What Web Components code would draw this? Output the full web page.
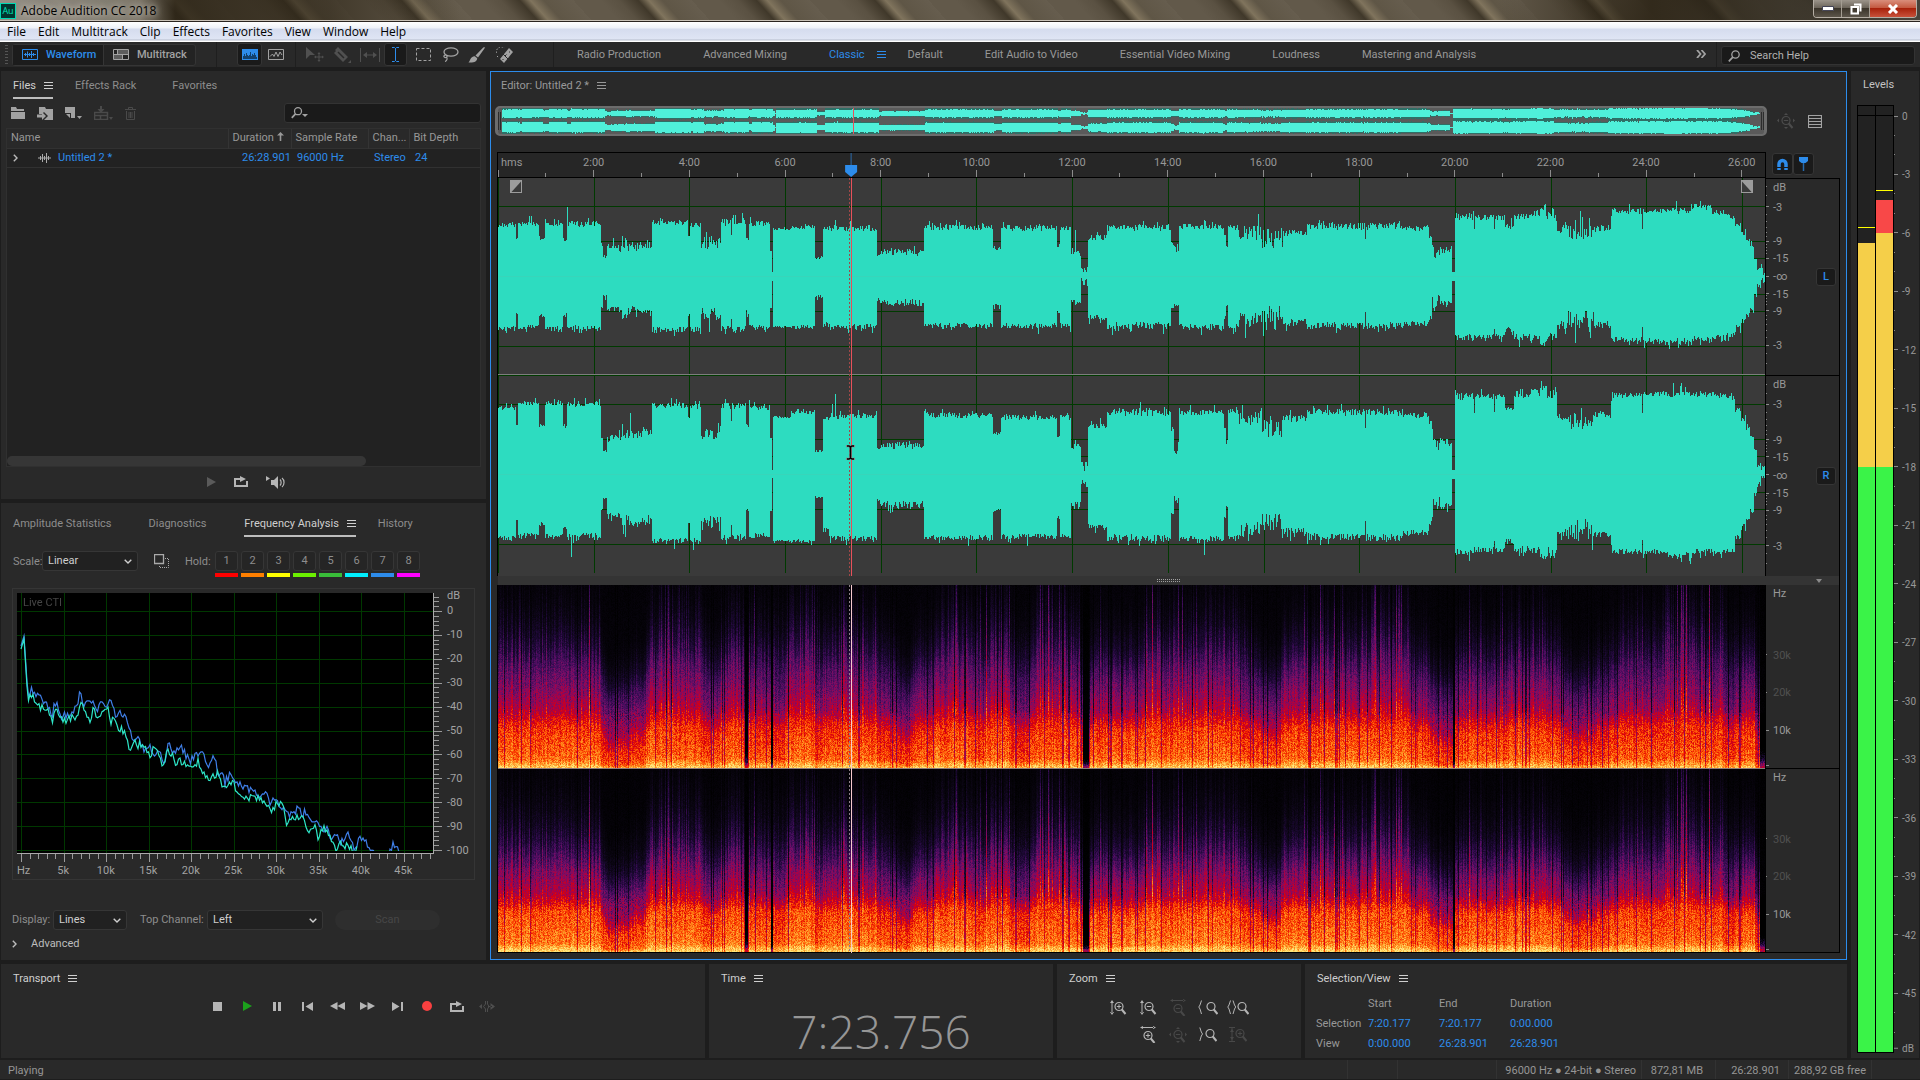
<!DOCTYPE html>
<html lang="en">
<head>
<meta charset="utf-8">
<title>Adobe Audition CC 2018</title>
<style>
  html, body { margin: 0; height: 100%; background: #1d1d1d; }
  body {
    --bg: #1d1d1d; --panel: #292929; --well: #222; --line: #353535;
    --dim: #8d8d8d; --text: #a2a2a2; --bright: #cfcfcf; --blue: #2d8ceb; --off: #484848;
    font: 11px/16px Roboto, "Open Sans", sans-serif; color: var(--text);
  }
</style>
</head>
<body>
<audition-app></audition-app>

<script>
const BASE = `
  * { box-sizing: border-box; }
  button, input, select { font: inherit; color: inherit; background: none; border: 0; margin: 0; padding: 0; outline: 0; appearance: none; text-align: left; white-space: nowrap; }
  svg { display: block; flex: none; }
`;
function define(name, css, html, extra = {}) {
  customElements.define(name, class extends HTMLElement {
    constructor() {
      super();
      const root = this.attachShadow({ mode: 'open' });
      const t = document.createElement('template');
      t.innerHTML = `<style>:host{display:block;min-width:0;min-height:0}${BASE}${css}</style>` + (typeof html === 'function' ? html(this) : html);
      root.append(t.content.cloneNode(true));
    }
    connectedCallback() { extra.ready && extra.ready.call(this, this.shadowRoot); }
  });
}

/* ---------- icons ---------- */
const zoomBody = sign => `<circle cx="9" cy="6.5" r="4" fill="none" stroke="currentColor" stroke-width="1.2"/><path d="M11.8 9.5 15.5 14" stroke="currentColor" stroke-width="2" fill="none"/>${sign}`;
const plus = '<path d="M6.8 6.5h4.4M9 4.3v4.4" stroke="currentColor"/>', minus = '<path d="M6.8 6.5h4.4" stroke="currentColor"/>';
const vArrow = '<path d="M2 0 4 3H0ZM2 15 4 12H0ZM1.5 2h1v11h-1z" fill="currentColor"/>';
const hArrow = '<path d="M1 1.5 4 0v3ZM17 1.5 14 0v3ZM3 1h12v1H3z" fill="currentColor"/>';
const ICONS = {
  menu: [9, 8, '<path d="M0 0h9v1H0zM0 3h9v1H0zM0 6h9v1H0z" fill="currentColor"/>'],
  wave: [16, 11, '<path d="M.5.5h15v10H.5z" fill="none" stroke="currentColor"/><path d="M2 5.5h12M3.5 4v3M5.500 2.500v6M7.500 4v3M9.500 2v7M11.500 4v3" stroke="currentColor" fill="none"/>'],
  multi: [16, 11, '<path d="M.5.5h15v10H.5zM0 5.500h16M4.500 0v5.500M9.500 5.500v5" fill="none" stroke="currentColor"/><path d="M5 1h10v4H5zM1 6h8v4H1z" fill="currentColor" opacity=".45"/>'],
  waveview: [16, 11, '<path d="M0 0h16v11H0z" fill="currentColor"/><path d="M1 10V7h1V5h1v2h1V4h1v2h1v1h1V6h1V3h1v4h1V5h1v1h1V4h1v2h1v2h1v2z" fill="#12426f"/>'],
  specview: [16, 11, '<path d="M.5.500h15v10H.5z" fill="none" stroke="currentColor"/><path d="M2 7.500 4.500 5 6 7.500 8 3l2 4.500L12 3l2 3" fill="none" stroke="currentColor"/>'],
  move: [18, 15, '<path d="M0 0 9 8H4L0 12ZM12.500 7h1v6h-1zM10 9.500h6v1h-6z" fill="currentColor"/><path d="m13 5 1.500 2h-3zM13 15l1.500-2h-3zM8 10l2-1.500v3zM18 10l-2-1.500v3z" fill="currentColor"/>'],
  razor: [18, 16, '<path d="M5 0 15 10l-5 5L1 6l2-2-1-1Z" fill="currentColor"/><path d="m5 5 6 6" stroke="#292929" stroke-width="1.500"/><path d="M18 13v3h-3z" fill="currentColor"/>'],
  slip: [20, 14, '<path d="M.5 0v14M19.500 0v14M5 7h10" stroke="currentColor" fill="none"/><path d="m3 7 4-3v6zM17 7l-4-3v6z" fill="currentColor"/>'],
  ibeam: [9, 15, '<path d="M1 .5h2.500l1 1 1-1H8M1 14.500h2.500l1-1 1 1H8M4.500 1v13" fill="none" stroke="currentColor"/>'],
  marquee: [15, 13, '<path d="M.5.500h14v12H.5z" fill="none" stroke="currentColor" stroke-dasharray="3 2"/>'],
  lasso: [17, 15, '<ellipse cx="9" cy="5" rx="7" ry="4.200" fill="none" stroke="currentColor" stroke-width="1.300"/><path d="M3 8c-2 1-1 3 1 2.500S5 8 3.500 8.500M4 10c2 1 1 4-1 4.500" fill="none" stroke="currentColor" stroke-width="1.200"/>'],
  brush: [17, 16, '<path d="M16.500 0c.5.500.3 1-.2 1.700L10 10.500 7.500 8.500 15 .8c.5-.5 1-.8 1.500-.8ZM6.800 9.300 9.200 11.300c0 3-3 4.700-8.700 4.200 2-1.500 1.300-5.700 6.300-6.200Z" fill="currentColor"/>'],
  heal: [17, 16, '<path d="m13 1 4 4L8 16l-4-4Z" fill="currentColor"/><path d="m7 7 5 5M9 9l1.500-1.500M13.500 4.500v1M7 12v1" stroke="#292929" fill="none"/><path d="M.5 6a5 5 0 0 1 8-5M1 9l2 2" fill="none" stroke="currentColor" stroke-dasharray="1.500 1.500"/>'],
  more: [10, 8, '<path d="m1 0 3.500 4L1 8M5.500 0 9 4 5.500 8" fill="none" stroke="currentColor" stroke-width="1.800"/>'],
  search: [12, 12, '<circle cx="7.500" cy="4.500" r="3.700" fill="none" stroke="currentColor" stroke-width="1.300"/><path d="M4.800 7.200.8 11.300" stroke="currentColor" stroke-width="1.700"/>'],
  searchd: [17, 12, '<circle cx="7" cy="4.200" r="3.500" fill="none" stroke="currentColor" stroke-width="1.300"/><path d="M4.500 6.800.8 10.800" stroke="currentColor" stroke-width="1.700"/><path d="M11 7h6l-3 3z" fill="currentColor"/>'],
  folder: [14, 12, '<path d="M0 0h5l1 2h7v2H0ZM0 5h14v7H0z" fill="currentColor"/>'],
  import: [16, 14, '<path d="M2 1h6l1 2h7v11H7l4-4-4-4-2 2H2Z" fill="currentColor"/><path d="M0 8.500h5V6l4 4-4 4v-2.500H0z" fill="currentColor"/>'],
  newfile: [17, 13, '<path d="M0 0h10v11H6V6H0Z" fill="currentColor"/><path d="M1 7h4v4z" fill="currentColor"/><path d="M12 9h5l-2.500 3z" fill="currentColor"/>'],
  insert: [19, 14, '<path d="M.5 6.500h13v7H.5zM0 9.500h14M6.500 9v5" fill="none" stroke="currentColor" stroke-width="1.500"/><path d="M6 0h2v3h2.500L7 7 3.500 3H6ZM15 11h4l-2 3z" fill="currentColor"/>'],
  trash: [11, 13, '<path d="M0 2.500h11M3.500 2V.500h4V2M1.500 4v8.500h8V4M4 5v6M5.500 5v6M7 5v6" fill="none" stroke="currentColor"/>'],
  up: [7, 9, '<path d="M3.500 0 7 3.500H4.300V9H2.700V3.500H0Z" fill="currentColor"/>'],
  chevr: [5, 8, '<path d="m.8.800 3.200 3.200-3.200 3.200" fill="none" stroke="currentColor" stroke-width="1.400"/>'],
  chevd: [8, 5, '<path d="m.7.700 3.300 3.300L7.300.7" fill="none" stroke="currentColor" stroke-width="1.400"/>'],
  clip: [13, 10, '<path d="M0 5h13M2.500 3v4M4.500 1v8M6.500 3v4M8.500 0v10M10.500 3v4" fill="none" stroke="currentColor"/>'],
  play: [9, 10, '<path d="M0 0 9 5 0 10Z" fill="currentColor"/>'],
  stop: [9, 9, '<path d="M0 0h9v9H0z" fill="currentColor"/>'],
  pause: [8, 9, '<path d="M0 0h3v9H0zM5 0h3v9H5z" fill="currentColor"/>'],
  prev: [11, 9, '<path d="M0 0h2v9H0zM11 0v9L3.500 4.500Z" fill="currentColor"/>'],
  next: [11, 9, '<path d="M9 0h2v9H9zM0 0v9l7.500-4.500Z" fill="currentColor"/>'],
  rew: [15, 8, '<path d="M7.500 0v8L0 4ZM15 0v8L7.500 4Z" fill="currentColor"/>'],
  ff: [15, 8, '<path d="M0 0v8l7.500-4ZM7.500 0v8L15 4Z" fill="currentColor"/>'],
  rec: [10, 10, '<circle cx="5" cy="5" r="5" fill="currentColor"/>'],
  loop: [14, 11, '<path d="M4 3H1v7h12V5" fill="none" stroke="currentColor" stroke-width="2"/><path d="M3 2h3V0l6 3-6 3V4H3z" fill="currentColor"/>'],
  skip: [16, 11, '<path d="M0 5.500 3 3v5zM16 5.500 11.500 2v7zM9 5h4v1H9z" fill="currentColor"/><path d="M6.500 0v3l-2 2.500 2 2.500v3M8.500 0v3l1.500 2.500L8.500 8v3" fill="none" stroke="currentColor"/>'],
  speaker: [20, 14, '<path d="M0 1v5l4-2.500ZM5 5h3l4-4v13l-4-4H5Z" fill="currentColor"/><path d="M14 4.500c1.500 1.500 1.500 4.500 0 6M16 3c2.700 2 2.700 7 0 9" fill="none" stroke="currentColor" stroke-width="1.200"/>'],
  copy: [15, 14, '<path d="M.5.500h9v9H.5z" fill="none" stroke="currentColor" stroke-width="1.300"/><path d="M11 4.500h3.500v9h-9V11" fill="none" stroke="currentColor" stroke-dasharray="1 1"/>'],
  list: [14, 13, '<path d="M.5.500h13v12H.5zM0 3.500h14M0 6.500h14M0 9.500h14" fill="none" stroke="currentColor" stroke-width="1.200"/>'],
  magnet: [13, 13, '<path d="M3 12V6a3.500 3.500 0 0 1 7 0v6" fill="none" stroke="currentColor" stroke-width="3.500"/><path d="M1 9.500h4M8 9.500h4" stroke="#1a1a1a"/>'],
  pin: [9, 14, '<path d="M0 0h9v4L6.500 6h-4L0 4Z" fill="currentColor"/><path d="M4.500 5v9" stroke="currentColor" stroke-width="1.500" opacity=".7"/>'],
  cross: [18, 16, '<g transform="translate(0 1)">' + zoomBody(minus) + '</g><path d="M9 0l2 2H7zM9 16l2-2H7zM0 7.500l2-2v4zM18 7.500l-2-2v4z" fill="currentColor"/>'],
  vin: [17, 15, vArrow + zoomBody(plus)], vout: [17, 15, vArrow + zoomBody(minus)],
  hout: [18, 17, hArrow + `<g transform="translate(0 3)">${zoomBody(minus)}</g>`],
  hin: [18, 17, hArrow + `<g transform="translate(0 3)">${zoomBody(plus)}</g>`],
  zl: [20, 15, '<path d="M3.500 0.500 2 5 .8 7 2 9l1.500 5" fill="none" stroke="currentColor"/><g transform="translate(4 0)">' + zoomBody('') + '</g>'],
  zsel: [22, 15, '<path d="M3.500 0.500 2 5 .8 7 2 9l1.500 5M6 0.500l1.500 4.500 1.200 2-1.200 2L6 14" fill="none" stroke="currentColor"/><g transform="translate(6 0)">' + zoomBody('') + '</g>'],
  zr: [18, 15, '<path d="m.8 0.500 1.500 4.500 1.200 2-1.200 2L.8 14" fill="none" stroke="currentColor"/><g transform="translate(2 0)">' + zoomBody('') + '</g>'],
  vfull: [18, 15, '<path d="M0 .5h6M0 14.500h6M3 1v13" stroke="currentColor" fill="none"/><path d="m3 2 2 3H1zM3 13l2-3H1z" fill="currentColor"/><g transform="translate(2 0)">' + zoomBody(plus) + '</g>'],
  fadein: [12, 13, '<path d="M0 0h12v13H0z" fill="#9c9c9c"/><path d="M11 1.500V12H1.500Z" fill="#3a3a3a"/>'],
  fadeout: [12, 13, '<path d="M0 0h12v13H0z" fill="#9c9c9c"/><path d="M1 1.500V12h9.500Z" fill="#3a3a3a"/>'],
  cursor: [9, 15, '<path d="M0 1h3l1.500 1L6 1h3M0 14h3l1.500-1L6 14h3M4.500 2v11" fill="none" stroke="#888" stroke-width="2.500"/><path d="M1 1h2l1.500 1L6 1h2M1 14h2l1.500-1L6 14h2M4.500 2v11" fill="none" stroke="#000" stroke-width="1.500"/>'],
  grip: [23, 4, '<path d="M0 .5h23M0 2.500h23" stroke="#a0a0a0" stroke-dasharray="1 1" fill="none"/>'],
  tri: [6, 4, '<path d="M0 0h6L3 4z" fill="#8a8a8a"/>']
};
customElements.define('ui-icon', class extends HTMLElement {
  constructor() {
    super();
    const [w, h, body] = ICONS[this.getAttribute('name')];
    this.attachShadow({ mode: 'open' }).innerHTML =
      `<style>:host{display:inline-flex;flex:none}svg{display:block}</style><svg width="${w}" height="${h}" viewBox="0 0 ${w} ${h}" aria-hidden="true">${body}</svg>`;
  }
});
const icon = n => `<ui-icon name="${n}"></ui-icon>`;

/* ---------- audio picture data ---------- */
const MINUTES = 26.4817, SPAN = 1267;
function rng(seed) { return () => { seed |= 0; seed = seed + 0x6D2B79F5 | 0; let t = Math.imul(seed ^ seed >>> 15, 1 | seed); t = t + Math.imul(t ^ t >>> 7, 61 | t) ^ t; return ((t ^ t >>> 14) >>> 0) / 4294967296; }; }
/* end, left top, left bottom, right top, right bottom, roughness */
const SEGMENTS = [
  [18,51,51,66,63,2],[20,37,37,48,46,1],[41,52,50,71,60,2],[47,37,39,48,49,2],[65,52,51,71,61,2],[69,37,38,48,52,2],
  [103,52,51,70,61,3],[105,31,31,36,35,1],[109,19,19,23,23,1],[124,28,33,36,41,4],[141,33,37,42,46,9],[154,32,37,41,44,5],
  [190,54,53,69,66,3],[192,40,37,57,49,1],[203,52,53,68,66,3],[223,34,38,41,47,8],[233,54,52,69,63,4],[234,41,41,52,50,1],
  [248,55,53,69,62,4],[251,36,35,48,36,2],[272,53,51,67,61,3],[274,26,30,36,36,1],[275,4,4,4,3,0],[293,47,50,57,66,1],
  [317,49,50,62,66,2],[325,19,19,23,22,2],[331,48,47,56,54,2],[379,48,50,58,64,3],[382,21,22,27,25,2],[426,24,26,29,30,4],
  [495,49,49,59,63,3],[503,28,28,40,36,2],[559,48,49,57,62,3],[562,31,36,38,42,2],[573,48,49,57,62,3],[583,23,26,28,30,3],
  [590,7,6,8,8,6],[609,39,41,48,52,3],[673,49,49,62,63,4],[676,33,31,45,40,2],[681,28,29,24,25,4],[726,50,50,62,64,3],
  [728,40,38,45,44,2],[730,29,28,32,33,2],[741,49,50,63,62,3],[764,44,44,57,55,9],[785,38,37,46,48,12],[809,43,46,56,56,4],
  [867,50,49,62,62,4],[868,37,35,46,46,0],[905,50,49,62,63,4],[931,48,47,59,58,3],[934,39,42,51,49,3],[942,25,25,31,29,8],
  [954,27,27,32,32,4],[957,4,4,4,4,0],[976,60,61,78,78,4],[977,47,58,61,72,0],[996,59,60,78,75,3],[997,47,52,62,66,0],
  [1007,59,60,78,75,3],[1016,50,53,66,67,4],[1032,60,60,80,75,4],[1042,64,61,82,76,4],[1048,69,66,86,81,3],[1059,60,60,80,77,5],
  [1070,47,48,58,59,5],[1096,43,43,54,54,11],[1113,48,48,60,60,4],[1114,60,60,74,72,2],[1144,65,63,79,77,3],[1145,47,50,61,65,0],
  [1170,65,64,80,77,3],[1194,66,65,80,81,4],[1214,69,62,80,77,3],[1228,64,62,79,77,4],[1237,60,59,77,75,3],[1243,51,51,65,63,3],
  [1248,43,44,55,52,3],[1252,36,37,46,44,2],[1256,31,32,38,36,2],[1259,16,18,24,20,2],[1263,9,10,9,9,4],[1267,4,3,5,3,3]
];
const SPIKES = { 33: [60,0,70,0], 69: [69,0,70,0], 73: [0,0,0,82], 124: [40,40,50,50], 337: [56,0,80,0], 334: [0,0,70,0], 577: [46,0,0,0], 505: [54,0,0,0], 706: [0,0,0,80], 642: [0,0,72,0], 1175: [0,0,91,0], 1183: [0,0,91,0], 31: [60,0,0,0], 211: [0,55,0,0], 176: [0,59,0,74], 529: [0,0,0,71], 614: [0,58,0,0] };
const ENVELOPE = (() => {
  const r = rng(7), out = []; let s = 0;
  for (let x = 0; x < SPAN; x++) {
    while (s < SEGMENTS.length - 1 && x >= SEGMENTS[s][0]) s++;
    const g = SEGMENTS[s], j = g[5] && g[5] + .8;
    out.push([1, 2, 3, 4].map((k, i) => {
      let v = g[k] + (r() - .55) * j * 1.5 + (r() > .86 ? r() * j * 1.6 : 0);
      const sp = SPIKES[x]; if (sp && sp[i]) v = Math.max(v, sp[i]);
      return Math.max(1, v);
    }));
  }
  return out;
})();
function fitCanvas(root, draw) {
  const c = root.querySelector('canvas');
  new ResizeObserver(() => {
    const w = c.clientWidth, h = c.clientHeight;
    if (!w || !h) return;
    c.width = w; c.height = h; draw(c.getContext('2d'), w, h);
  }).observe(c);
}
function drawEnvelope(g, w, cy, ch, k) {
  for (let x = 0; x < w; x++) {
    const e = ENVELOPE[Math.min(SPAN - 1, Math.floor(x * SPAN / w))];
    const a = Math.round(e[ch * 2] * k), b = Math.round(e[ch * 2 + 1] * k);
    g.fillRect(x, Math.round(cy) - a, 1, a + b + 1);
  }
}
const CANVAS = ':host{contain:size;position:relative;overflow:hidden}canvas{display:block;width:100%;height:100%}';
const HEAD = .2787;

define('wave-display', CANVAS + `
  button{position:absolute;top:2px} .in{left:12px} .out{right:12px} .cur{position:absolute;left:27.45%;top:267px;pointer-events:none}`,
  `<canvas></canvas><button class="in" aria-label="Fade in">${icon('fadein')}</button><button class="out" aria-label="Fade out">${icon('fadeout')}</button><span class="cur">${icon('cursor')}</span>`,
  { ready(root) { fitCanvas(root, (g, w, h) => {
    g.fillStyle = '#3a3a3a'; g.fillRect(0, 0, w, h);
    const k = h / 398, green = '#003a00';
    g.fillStyle = green;
    for (let m = 0; m < MINUTES; m += 2) g.fillRect(Math.round(m / MINUTES * w), 0, 1, 395 * k);
    for (const c of [98, 296]) for (const d of [-70, -35, -18, 18, 35, 70]) g.fillRect(0, Math.round((c + d) * k), w, 1);
    g.fillStyle = '#2ddcc0';
    drawEnvelope(g, w, 98 * k, 0, k); drawEnvelope(g, w, 296 * k, 1, k);
    g.fillStyle = 'rgba(70,205,180,.45)';
    for (const c of [98, 296]) g.fillRect(0, Math.round(c * k), w, 1);
    g.fillStyle = '#7d7d7d'; g.fillRect(0, Math.round(196 * k), w, 1);
    g.fillStyle = green; g.fillRect(0, Math.round(197 * k), w, 1);
    const p = Math.round(HEAD * w);
    g.fillStyle = '#a04848'; for (let y = 0; y < h; y += 4) g.fillRect(p - 2, y, 1, 2);
    g.fillStyle = '#e8505a'; g.fillRect(p, 0, 1, h);
  }); } });

define('wave-overview', CANVAS + `:host{border:2px solid #6c6c6c;border-radius:5px;background:#5a5a5a;padding:0 4px}
  :host{border-left-width:3px;border-right-width:3px} .h{position:absolute;top:4px;bottom:4px;width:3px;border:solid #2c2c2c;border-width:0 1px}`,
  `<canvas></canvas><span class="h" style="left:0"></span><span class="h" style="right:0"></span>`,
  { ready(root) { fitCanvas(root, (g, w) => {
    g.fillStyle = '#2f6f66'; drawEnvelope(g, w, 5, 0, .1); drawEnvelope(g, w, 19, 1, .09);
    g.fillStyle = '#4ff0da'; drawEnvelope(g, w, 5, 0, .07); drawEnvelope(g, w, 19, 1, .07);
    g.fillStyle = '#e8505a'; g.fillRect(Math.round(HEAD * w), 0, 1, 26);
  }); } });

/* spectrogram: [end, reach, brightness] */
const LOUD = [[103,1,0],[112,.22,-.04],[130,.34,-.05],[148,.5,-.05],[203,1.1,0],[212,.8,-.04],[223,.6,-.04],[247,1.05,0],[250,.08,-.25],[273,.95,-.03],
  [275,.06,-.35],[287,.95,-.09],[317,1.1,-.01],[323,.65,-.08],[379,1.02,-.01],[398,.85,-.08],[412,.42,-.07],[435,.8,-.03],[479,1.1,0],[488,.9,-.06],[511,1.1,0],
  [532,.85,-.08],[582,1.1,-.01],[585,.6,-.1],[591,.06,-.35],[640,.8,0],[745,1.02,0],[760,.75,-.05],[783,.48,-.03],[815,.95,0],[870,1.02,0],[915,1.08,0],[930,.75,-.04],[955,.42,-.05],[957,.06,-.35],
  [1010,.86,-.03],[1045,1.0,0],[1064,.9,-.03],[1095,.48,-.03],[1120,.75,-.05],[1165,1.05,-.03],[1225,1.15,-.03],[1237,.75,-.08],[1257,.9,-.03],[1262,.4,-.12],[1267,.1,-.3]];
const CURVES = [
  [[0,.97],[.012,.93],[.05,.77],[.15,.72],[.22,.69],[.27,.61],[.33,.5],[.45,.41],[.58,.32],[.7,.19],[.85,.1],[1,.05],[3,.0]],
  [[0,.99],[.012,.96],[.05,.8],[.15,.75],[.23,.72],[.28,.6],[.33,.5],[.44,.42],[.55,.29],[.68,.16],[.82,.09],[1,.04],[3,.0]]];
const RAMP = [[0,0,0],[10,5,18],[28,8,52],[66,13,92],[118,14,104],[176,0,64],[218,0,10],[250,60,0],[255,125,22],[255,180,62],[255,232,125]];
function curve(pts, x) { for (let i = 1; i < pts.length; i++) if (x <= pts[i][0]) { const a = pts[i - 1], b = pts[i]; return a[1] + (b[1] - a[1]) * (x - a[0]) / (b[0] - a[0]); } return 0; }
define('spectral-display', CANVAS, '<canvas></canvas>', { ready(root) { fitCanvas(root, (g, w, h) => {
  const img = g.createImageData(w, h), d = img.data, half = h / 2;
  const cols = rng(21), noise = rng(5), reach = [], shift = [];
  let s = 0, prev = 1;
  for (let x = 0; x < w; x++) {
    const t = x * SPAN / w;
    while (s < LOUD.length - 1 && t >= LOUD[s][0]) s++;
    prev += (LOUD[s][1] - prev) * (LOUD[s][1] < .11 || prev < .11 ? 1 : .25);
    const n = cols(), spike = cols(), quiet = LOUD[s][1] < .11;
    reach[x] = prev * (quiet ? 1 : .72 + n * .42 + (spike > .93 ? .4 : 0));
    shift[x] = LOUD[s][2] + (quiet ? 0 : (cols() - .5) * .1 - (spike < .09 ? .22 : 0) + Math.sin(t / 11) * .012);
  }
  for (let y = 0; y < h; y++) {
    const ch = y < half ? 0 : 1, f = 1 - (y - ch * half + 1) / half;
    for (let x = 0; x < w; x++) {
      const r = reach[x];
      let low = r < .11 ? r + f * .5 : r + Math.max(0, 1 - r) * Math.min(.5, f * 2);
      if (f < .3 && r > .6) low = .55 + r * .45;
      let v = curve(CURVES[ch], f / Math.max(.05, low));
      v += shift[x] * (f < .3 ? .9 : v * 2.4) + (noise() - .5) * (f < .3 ? .2 : .03 + v * .24);
      v = Math.max(0, Math.min(.999, v)) * 10;
      const i = Math.floor(v), q = v - i, a = RAMP[i], b = RAMP[i + 1], o = (y * w + x) * 4;
      for (let c = 0; c < 3; c++) d[o + c] = a[c] + (b[c] - a[c]) * q;
      d[o + 3] = 255;
    }
  }
  g.putImageData(img, 0, 0);
  g.fillStyle = '#8c7a78'; g.fillRect(0, Math.round(half) - 1, w, 1);
  g.fillStyle = '#000'; g.fillRect(0, h - 1, w, 1);
  const p = Math.round(HEAD * w);
  g.fillStyle = '#8f7f8a'; for (let y = 0; y < h; y += 4) g.fillRect(p - 2, y, 1, 2);
  g.fillStyle = '#f5c9cc'; g.fillRect(p, 0, 1, h);
}); } });

/* frequency analysis curves, in graph pixels */
const CYAN = [[4,56],[7,46],[11,109],[14,101],[18,107],[23,114],[29,116],[33,119],[35,131],[37,119],[40,116],[45,125],[49,129],[56,123],[59,129],[63,110],[69,121],[73,129],[76,114],[80,127],[85,118],[91,114],[93,131],[96,122],[101,133],[106,139],[110,144],[113,157],[116,147],[121,152],[126,150],[133,163],[138,153],[143,165],[146,177],[150,154],[155,162],[158,172],[163,167],[170,175],[176,177],[181,168],[186,179],[193,185],[200,180],[207,195],[213,188],[220,196],[226,202],[231,206],[237,202],[242,207],[248,209],[254,219],[260,210],[266,214],[270,231],[276,225],[280,222],[286,227],[292,239],[297,232],[301,243],[306,235],[312,242],[319,255],[325,249],[331,255],[340,257]];
const BLUE = [[4,53],[7,43],[11,104],[14,97],[17,103],[21,100],[26,110],[33,115],[35,124],[37,112],[40,111],[44,124],[50,122],[56,119],[60,113],[63,101],[66,112],[71,105],[75,110],[80,117],[84,108],[89,112],[94,106],[99,122],[103,116],[107,124],[112,132],[116,150],[121,143],[126,156],[132,152],[136,164],[143,153],[147,172],[151,148],[154,155],[158,160],[164,153],[169,163],[173,168],[177,165],[181,159],[187,164],[191,173],[195,164],[199,171],[201,183],[205,178],[208,189],[213,181],[219,190],[225,194],[230,193],[236,201],[240,199],[245,205],[249,200],[253,213],[258,206],[264,212],[270,221],[275,223],[281,213],[285,223],[289,218],[293,231],[298,226],[303,231],[307,236],[311,235],[315,248],[319,242],[324,249],[332,240],[338,257],[342,244],[348,247],[353,257],[356,252],[358,262],[361,270],[370,270],[373,258],[376,251],[378,256],[380,249],[382,257]];
define('frequency-graph', `:host{border:1px solid var(--line);padding:4px 0 0 4px}
  .g{display:grid;grid-template-columns:1fr 40px;grid-template-rows:1fr 25px;height:100%}
  .plot{contain:size;background:#000;position:relative;border-right:1px solid #aaa;border-bottom:1px solid #aaa} canvas{display:block;width:100%;height:100%}
  .live{position:absolute;left:6px;top:2px;color:#454545}
  .y{display:grid;grid-template-columns:9px 1fr;min-height:0}.y svg{width:9px;height:100%}
  .yl{display:grid;grid-template-rows:10px repeat(10,24fr) 11px;padding:0 0 0 4px;min-height:0}
  .yl span{display:block;height:0;line-height:0;align-self:start;padding-top:8px}
  .yl .u{padding-top:3px}
  .x{grid-column:1/3}.x svg{width:100%;height:9px}
  .xl{display:grid;grid-template-columns:25px repeat(9,42.5px);justify-content:start}.xl span{text-align:center}.xl .u{text-align:left}`,
  `<div class="g"><div class="plot"><canvas></canvas><span class="live">Live CTI</span></div>
  <div class="y"><svg class="ty"></svg><div class="yl"><span class="u">dB</span>${[0,-10,-20,-30,-40,-50,-60,-70,-80,-90,-100].map(n => `<span>${n}</span>`).join('')}</div></div>
  <div class="x"><svg class="tx"></svg><div class="xl"><span class="u">Hz</span>${[5,10,15,20,25,30,35,40,45].map(n => `<span>${n}k</span>`).join('')}</div></div></div>`,
  { ready(root) {
    let y = ''; for (let i = -3; i <= 50; i++) y += `<path d="M0 ${Math.round(18 + i * 4.78) + .5}H${i % 5 ? 5 : 8}" stroke="#9a9a9a"/>`;
    root.querySelector('.ty').innerHTML = y;
    let x = ''; for (let i = 0; i <= 48; i++) x += `<path d="M${Math.round(4 + i * 8.512) + .5} 0V${i % 5 ? 5 : 8}" stroke="#9a9a9a"/>`;
    root.querySelector('.tx').innerHTML = x;
    fitCanvas(root, (g, w, h) => {
      g.fillStyle = '#003800';
      for (let i = 0; i < 10; i++) g.fillRect(Math.round(4 + i * 42.56), 0, 1, h);
      for (let i = 0; i <= 10; i++) g.fillRect(0, Math.round(18 + i * 23.9), w, 1);
      g.save(); g.beginPath(); g.rect(0, 0, w, 258); g.clip();
      const line = (pts, color, seed) => {
        const r = rng(seed); g.strokeStyle = color; g.lineWidth = 1.2; g.beginPath();
        for (let px = 4; px <= pts[pts.length - 1][0]; px += 1.5) {
          const py = curve(pts, px) + (px > 12 ? (r() - .5) * 8 : 0);
          px === 4 ? g.moveTo(px, py) : g.lineTo(px, py);
        }
        g.stroke();
      };
      line(BLUE, '#3f7fe8', 3); line(CYAN, '#2ee6c8', 9);
      g.restore();
    });
  } });

/* ---------- window chrome ---------- */
define('title-bar', `:host{display:flex;align-items:center;height:22px;border-bottom:1px solid #2a2420;box-shadow:inset 0 -1px #c9c2b8;
    font:12px/16px "Open Sans",sans-serif;color:#000;
    background:linear-gradient(90deg,rgba(150,146,136,.95) 0,rgba(130,124,112,.8) 140px,rgba(44,36,22,.85) 175px,rgba(44,36,22,.6) 330px,transparent 460px,transparent 78%,rgba(38,30,16,.8) 86%,rgba(60,58,52,.7)),
    repeating-linear-gradient(48deg,#62594a 0 20px,#5a5142 34px,#40382a 48px,#80745d 56px,#5f5646 66px,#665d4e 88px)}
  .au{width:16px;height:16px;background:#00342f;border:1px solid #00d9b4;color:#00e4bb;font-size:9px;line-height:13px;text-align:center}
  .t{padding:0 5px;flex:1;text-shadow:0 0 6px #c8c4bb,0 0 8px #c8c4bb}
  .w{display:flex;align-self:flex-start;height:18px;margin-right:3px;border:1px solid #b5aea4;border-top:0;border-radius:0 0 4px 4px;overflow:hidden;color:#fff}
  .w button{display:grid;place-items:center;background:linear-gradient(#9b948a,#6c655a 45%,#3a342a 50%,#5c554a);border-right:1px solid #a49d92}
  .w .c{background:linear-gradient(#d98e7b,#c45a41 45%,#a8220b 50%,#c8513a);border:0}`,
  `<span class="au">Au</span><span class="t">Adobe Audition CC 2018</span><div class="w">
  <button style="width:28px" aria-label="Minimize"><svg width="12" height="5"><path d="M.5.500h11v4H.5z" fill="#fff" stroke="#445"/></svg></button>
  <button style="width:28px" aria-label="Restore"><svg width="12" height="12"><path d="M4 1.500h6.500v7M1.500 4h6.500v6.500H1.500z" fill="none" stroke="#fff" stroke-width="2"/></svg></button>
  <button class="c" style="width:46px" aria-label="Close"><svg width="12" height="10"><path d="m2 1 8 8M10 1 2 9" stroke="#fff" stroke-width="3"/></svg></button></div>`);

define('menu-bar', `:host{display:flex;gap:12px;height:20px;padding-left:7px;font:12px/19px "Open Sans",sans-serif;color:#000;
  background:linear-gradient(#fff,#eef1f8 6px,#d5dcee 7px,#dfe5f4 17px,#b5bccb 18px,#fff 19px)} button{height:19px}`,
  ['File','Edit','Multitrack','Clip','Effects','Favorites','View','Window','Help'].map(t => `<button>${t}</button>`).join(''));

define('tool-bar', `:host{display:flex;align-items:center;height:25px;background:var(--panel);color:var(--text)}
  .grip{width:3px;height:19px;margin:0 4px 0 5px;background:repeating-linear-gradient(#555 0 1px,transparent 1px 3px)}
  .mode{display:flex;border:1px solid #353535;border-radius:3px;height:22px;background:#232323}
  .mode button{display:flex;align-items:center;gap:8px;width:91px;padding-left:9px;font-weight:500} .mode .on{background:#1c1c1c;color:var(--blue);border-right:1px solid #353535}
  .sep{width:1px;height:25px;background:#1f1f1f}
  .t{display:grid;place-items:center;height:23px} .act{background:#1a1a1a;border:1px solid #353535;border-radius:3px;color:var(--blue)} .off{color:#505050}
  .ws{display:flex;align-items:center;gap:42px;flex:1;color:#989898;padding-top:1px} .ws .on{display:flex;align-items:center;gap:12px;color:var(--blue);margin-right:-20px}
  label{display:flex;align-items:center;gap:10px;width:194px;height:19px;margin:2px 5px 0 4px;padding-left:6px;background:#1a1a1a;border:1px solid #333;border-radius:3px}
  input{min-width:0;flex:1} input::placeholder{color:#b0b0b0;opacity:1}
  .tools{display:flex;align-items:center}`,
  `<span class="grip"></span><div class="mode"><button class="on">${icon('wave')}Waveform</button><button>${icon('multi')}Multitrack</button></div>
  <span class="sep" style="margin:0 20px 0 20px"></span>
  <div class="tools"><button class="t act" style="width:25px" aria-label="Waveform view">${icon('waveview')}</button><button class="t" style="width:27px" aria-label="Spectral view">${icon('specview')}</button>
  <span class="sep" style="margin:0 6px"></span>
  <button class="t off" style="width:26px" aria-label="Move">${icon('move')}</button><button class="t off" style="width:28px" aria-label="Razor">${icon('razor')}</button><button class="t off" style="width:28px" aria-label="Slip">${icon('slip')}</button>
  <button class="t act" style="width:23px" aria-label="Time selection">${icon('ibeam')}</button><button class="t" style="width:33px" aria-label="Marquee">${icon('marquee')}</button><button class="t" style="width:20px" aria-label="Lasso">${icon('lasso')}</button><button class="t" style="width:32px" aria-label="Brush">${icon('brush')}</button><button class="t" style="width:24px" aria-label="Spot healing">${icon('heal')}</button></div>
  <span class="sep" style="margin:0 23px 0 37px"></span>
  <div class="ws"><button>Radio Production</button><button>Advanced Mixing</button><button class="on">Classic${icon('menu')}</button><button>Default</button><button>Edit Audio to Video</button><button>Essential Video Mixing</button><button>Loudness</button><button>Mastering and Analysis</button></div>
  <button aria-label="More workspaces" style="padding-right:10px">${icon('more')}</button><span class="sep"></span>
  <label>${icon('search')}<input placeholder="Search Help" aria-label="Search Help"></label>`);

/* a docked panel: tabs in one row, content below */
define('dock-panel', `:host{display:flex;flex-direction:column;background:var(--panel)}
  ::slotted(*){min-width:0;min-height:0} slot[name=tabs]{display:flex;flex:none;height:26px;align-items:flex-start}`,
  '<slot name="tabs"></slot><slot></slot>');
define('panel-tab', `:host{display:flex;color:var(--dim)} :host([on]){color:var(--bright)}
  button{display:flex;align-items:center;gap:8px;height:26px;padding-top:var(--tab-pad,3px)}
  :host([under]) button{box-shadow:0 2px #bdbdbd}`,
  el => `<button><slot></slot>${el.hasAttribute('on') ? icon('menu') : ''}</button>`);

define('select-box', `:host{display:grid;height:20px;color:var(--bright)} select,span{grid-area:1/1}
  select{width:100%;height:20px;padding:0 22px 0 5px;background:#212121;border:1px solid #363636;border-radius:3px}
  span{justify-self:end;align-self:center;padding-right:6px;pointer-events:none;display:flex}`,
  el => `<select aria-label="${el.getAttribute('label')}"><option>${el.getAttribute('value')}</option></select><span>${icon('chevd')}</span>`);

define('files-panel', `:host{display:flex;flex-direction:column;flex:1}
  .tools{display:flex;align-items:center;height:20px;margin:6px 5px 5px 10px;gap:12px} .tools .off{color:#4a4a4a} .tools button{display:flex}
  .tools label{margin-left:auto;width:197px;height:20px;display:flex;align-items:center;gap:4px;padding-left:6px;background:#1a1a1a;border:1px solid #333;border-radius:3px} input{min-width:0;flex:1}
  .list{display:flex;flex-direction:column;justify-content:space-between;flex:1;margin:0 5px;background:linear-gradient(var(--panel) 19px,var(--well) 19px);border:1px solid #303030}
  table{table-layout:fixed;width:100%;border-collapse:collapse} th{font-weight:400;text-align:left;height:19px;padding:0 0 0 4px;border-left:1px solid #343434;white-space:nowrap;color:#989898} th:first-child{border:0}
  td{height:19px;padding:1px 0 0 6px;color:var(--blue);border:solid #313131;border-width:1px 0;white-space:nowrap} .n{display:flex;align-items:center;gap:7px} .n .a{color:#bbb;margin-right:13px;display:flex} .n .b{color:#aaa;display:flex}
  .bar{width:359px;height:10px;border-radius:5px;background:#363636}
  .pre{display:flex;align-items:center;justify-content:center;gap:18px;height:32px;padding:0 0 3px 6px;color:#b5b5b5} .pre button{display:flex}`,
  `<div class="tools"><button aria-label="Open">${icon('folder')}</button><button aria-label="Import">${icon('import')}</button><button aria-label="New">${icon('newfile')}</button><button class="off" aria-label="Insert">${icon('insert')}</button><button class="off" aria-label="Delete">${icon('trash')}</button>
  <label>${icon('searchd')}<input aria-label="Filter files"></label></div>
  <div class="list"><table><colgroup><col><col style="width:63px"><col style="width:77px"><col style="width:41px"><col style="width:71px"></colgroup>
  <thead><tr><th>Name</th><th>Duration ${icon('up')}</th><th>Sample Rate</th><th>Chan...</th><th>Bit Depth</th></tr></thead>
  <tbody><tr><td><div class="n"><span class="a">${icon('chevr')}</span><span class="b">${icon('clip')}</span>Untitled 2 *</div></td><td style="padding-left:14px">26:28.901</td><td>96000 Hz</td><td>Stereo</td><td>24</td></tr></tbody></table><div class="bar"></div></div>
  <div class="pre"><button style="color:#5a5a5a" aria-label="Play">${icon('play')}</button><button aria-label="Loop">${icon('loop')}</button><button aria-label="Auto-play">${icon('speaker')}</button></div>`);

const HOLD = ['#f00','#ff7f00','#ff0','#6cf000','#39bd39','#00f0ff','#2d8ceb','#f0f'];
define('frequency-panel', `:host{display:flex;flex-direction:column;flex:1}
  .r{display:flex;align-items:center;color:var(--dim)} .hold{display:flex;gap:3px;margin-left:4px}
  .hold button{width:23px;height:20px;text-align:center;border:1px solid #363636;border-radius:3px;background:#252525} .hold span{display:block;height:4px;margin-top:2px}
  frequency-graph{flex:1} .scan{width:105px;height:20px;margin-left:12px;border-radius:10px;background:#2e2e2e;color:#474747;text-align:center}`,
  `<div class="r" style="padding:16px 0 0 12px;align-items:flex-start"><span style="width:29px;line-height:22px">Scale:</span><select-box label="Scale" value="Linear" style="width:96px"></select-box>
  <button style="margin:3px 0 0 16px;width:31px;color:#aaa" aria-label="Copy">${icon('copy')}</button><span style="line-height:22px;width:26px">Hold:</span>
  <div class="hold">${HOLD.map((c, i) => `<div><button>${i + 1}</button><span style="background:${c}"></span></div>`).join('')}</div></div>
  <frequency-graph style="margin:11px 11px 0 11px"></frequency-graph>
  <div class="r" style="padding:30px 0 0 11px"><span style="width:41px">Display:</span><select-box label="Display" value="Lines" style="width:74px"></select-box><span style="margin-left:13px;width:67px">Top Channel:</span><select-box label="Top Channel" value="Left" style="width:116px"></select-box><button class="scan" disabled>Scan</button></div>
  <div class="r" style="height:30px;padding:0 0 2px 11px"><button style="display:flex;align-items:center;gap:14px;color:#bdbdbd">${icon('chevr')}Advanced</button></div>`);

/* ---------- editor ---------- */
define('time-ruler', `:host{display:grid;contain:size;border-top:1px solid #000;border-bottom:1px solid #000;overflow:hidden;background:#262626}
  .l,svg{grid-area:1/1} .l{display:flex;padding-top:2px} .l span{flex:none;width:7.552%;text-align:center;color:#989898} .l .u{width:3.776%;text-align:left;padding-left:3px} svg{width:100%;height:24px}`,
  () => {
    let t = '', l = '';
    for (let m = 0; m <= 26; m++) t += `<line x1="${m / MINUTES * 100}%" x2="${m / MINUTES * 100}%" y1="${m % 2 ? 20 : 17}" y2="24" stroke="#8c8c8c" shape-rendering="crispEdges"/>`;
    for (let m = 2; m <= 26; m += 2) l += `<span>${m}:00</span>`;
    return `<div class="l"><span class="u">hms</span>${l}</div><svg>${t}<svg x="27.87%" style="overflow:visible"><path d="M-.5 0h1v13h-1z" fill="#2d6cab"/><path d="M-6 12H6v7L0 24-6 19Z" fill="#2d8ceb"/></svg></svg>`;
  });

define('db-scale', `:host{display:grid;grid-template-columns:7px 1fr 23px;border-bottom:1px solid #000;contain:size;color:#989898}
  svg{width:4px;height:100%} .l{display:grid;grid-template-rows:20fr 35fr 17fr 18fr 18fr 17fr 35fr 38fr} .l span{height:16px;line-height:18px;display:block;min-height:0}
  button{align-self:center;width:20px;height:18px;border:1px solid #353535;border-radius:3px;background:#1a1a1a;color:var(--blue);text-align:center;font-weight:500}`,
  el => {
    const at = [8, 17, 28, 36, 43, 49, 54, 58, 63, 66, 69, 72, 75, 80, 98, 116, 118, 121, 124, 127, 133, 138, 142, 147, 153, 160, 168, 176, 186];
    const big = [28, 63, 80, 98, 116, 133, 168];
    return `<svg>${at.map(y => `<line x1="0" x2="${big.includes(y) ? 3 : 1}" y1="${y / 198 * 100}%" y2="${y / 198 * 100}%" stroke="#8c8c8c" shape-rendering="crispEdges"/>`).join('')}</svg>
    <div class="l">${['dB', '-3', '-9', '-15', '-∞', '-15', '-9', '-3'].map(t => `<span>${t}</span>`).join('')}</div><button>${el.getAttribute('ch')}</button>`;
  });
define('hz-scale', `:host{display:grid;grid-template-columns:7px 1fr;border-bottom:1px solid #000;contain:size;color:#989898}
  svg{width:4px;height:100%} .l{display:grid;grid-template-rows:62fr 38fr 38fr 46fr} .l span{height:16px;line-height:18px} .d{color:#505050}`,
  `<svg>${[[70, 1], [108, 1], [146, 3], [181, 3]].map(([y, w]) => `<line x1="0" x2="${w}" y1="${y / 1.84}%" y2="${y / 1.84}%" stroke="#8c8c8c" shape-rendering="crispEdges"/>`).join('')}</svg>
  <div class="l"><span>Hz</span><span class="d">30k</span><span class="d">20k</span><span>10k</span></div>`);

define('audio-editor', `:host{display:flex;flex-direction:column;flex:1}
  .ov{display:grid;grid-template-columns:1fr 79px;height:30px;margin:8px 0 16px 4px} .ic{display:flex;align-items:center;gap:13px;padding-left:10px} .ic button{display:flex}
  .work{flex:1;display:grid;grid-template-columns:1fr 74px;grid-template-rows:26px 198fr 200fr 9px 184fr 184fr;margin:0 6px 6px;min-height:0}
  .m{border-left:1px solid #000;border-right:1px solid #000} .s{border-right:1px solid #000}
  .snap{display:flex;padding:1px 0 3px 6px} .snap button{width:21px;display:grid;place-items:center;background:#1a1a1a;border:1px solid #353535;border-radius:3px;color:var(--blue)}
  .split{grid-column:1/3;background:#343434;display:grid;grid-template-columns:1fr auto 1fr;align-items:center;border-right:1px solid #000;margin-left:1px;min-height:0} .split .e{display:flex;justify-self:end;padding-right:17px}`,
  `<div class="ov"><wave-overview></wave-overview><div class="ic"><button style="color:#4c4c4c" aria-label="Zoom out full">${icon('cross')}</button><button aria-label="Show overview">${icon('list')}</button></div></div>
  <div class="work"><time-ruler class="m"></time-ruler><div class="snap"><button aria-label="Snapping">${icon('magnet')}</button><button aria-label="Marker">${icon('pin')}</button></div>
  <wave-display class="m" style="grid-row:2/4"></wave-display><db-scale class="s" ch="L" style="border-top:1px solid #000"></db-scale><db-scale class="s" ch="R" style="border-bottom:0"></db-scale>
  <div class="split"><i></i>${icon('grip')}<span class="e">${icon('tri')}</span></div>
  <spectral-display class="m" style="grid-row:5/7"></spectral-display><hz-scale class="s"></hz-scale><hz-scale class="s"></hz-scale></div>`);

/* ---------- levels ---------- */
define('level-meter', `:host{display:grid;grid-template-columns:37px 5px 1fr;flex:1;margin:8px 0 5px 6px;font-size:10px}
  .b{display:grid;grid-template-columns:1fr 1fr;grid-template-rows:9px 1fr;gap:1px;background:#000;border:1px solid #000} .b>*{background:#222} .m{display:grid}
  .m i{display:block} svg{width:5px;height:100%}
  .l{display:grid;grid-template-rows:repeat(15,585fr) 55px 12px;padding:4px 0 0 3px;color:#989898} .l span{height:0}`,
  () => {
    let t = ''; for (let i = 0; i <= 48; i++) { const y = (11 + i * 19.49) / 948 * 100; if (y < 99) t += `<line x1="0" x2="${i % 3 ? 1 : 4}" y1="${y}%" y2="${y}%" stroke="#8c8c8c" shape-rendering="crispEdges"/>`; }
    t += '<line x1="0" x2="4" y1="99.500%" y2="99.500%" stroke="#8c8c8c"/>';
    let l = ''; for (let i = 0; i <= 45; i += 3) l += `<span>${i ? '-' + i : 0}</span>`;
    const bar = (rows, cols) => `<div class="m" style="grid-template-rows:${rows}">${cols.map(c => `<i style="background:${c}"></i>`).join('')}</div>`;
    return `<div class="b"><i></i><i></i>
    ${bar('111fr 1px 15fr 224fr 586fr', ['', '#ff0', '', '#f5cf49', '#3af348'])}
    ${bar('74fr 1px 9fr 33fr 234fr 586fr', ['', '#ff0', '', '#f84848', '#f5cf49', '#3af348'])}</div><svg>${t}</svg><div class="l">${l}<span>dB</span></div>`;
  });

/* ---------- bottom panels ---------- */
const TRANSPORT = ['stop', 'play', 'pause', 'prev', 'rew', 'ff', 'next', 'rec', 'loop', 'skip'];
define('transport-controls', `:host{display:flex;padding:2px 0 0 201px;color:#b5b5b5} button{display:grid;place-items:center;height:28px;width:30px;flex:none}`,
  TRANSPORT.map(n => `<button aria-label="${n}" style="${n === 'play' ? 'color:#1ca01c' : n === 'rec' ? 'color:#f84040' : n === 'skip' ? 'color:#4e4e4e' : ''}">${icon(n)}</button>`).join(''));
define('zoom-controls', `:host{display:grid;grid-template-columns:repeat(5,30px);grid-auto-rows:27px;padding:4px 0 0 46px;color:#b5b5b5} button{display:grid;place-items:center} .off{color:#484848}`,
  `<button aria-label="Zoom in amplitude">${icon('vin')}</button><button aria-label="Zoom out amplitude">${icon('vout')}</button><button class="off" aria-label="Zoom out time">${icon('hout')}</button><button aria-label="Zoom to in point">${icon('zl')}</button><button aria-label="Zoom to selection">${icon('zsel')}</button>
  <i></i><button aria-label="Zoom in time">${icon('hin')}</button><button class="off" aria-label="Zoom out full">${icon('cross')}</button><button aria-label="Zoom to out point">${icon('zr')}</button><button class="off" aria-label="Reset amplitude">${icon('vfull')}</button>`);
define('selection-view', `:host{padding:4px 0 0 11px} table{border-collapse:collapse} th,td{padding:0;font-weight:400;text-align:left;height:20px;color:#989898} td{width:71px} th:first-child{width:52px} button{color:var(--blue)}`,
  `<table><thead><tr><th></th><th>Start</th><th>End</th><th>Duration</th></tr></thead><tbody>
  <tr><th>Selection</th><td><button>7:20.177</button></td><td><button>7:20.177</button></td><td><button>0:00.000</button></td></tr>
  <tr><th>View</th><td><button>0:00.000</button></td><td><button>26:28.901</button></td><td><button>26:28.901</button></td></tr></tbody></table>`);
define('status-bar', `:host{display:flex;height:19px;margin:2px 0 1px;background:var(--panel);color:#969696;line-height:21px;padding:0 48px 0 8px}
  span{border-left:1px solid #323232;text-align:right;height:19px;white-space:nowrap}.f{flex:1;border:0;text-align:left}`,
  `<span class="f">Playing</span><span style="width:50px"></span><span style="width:99px"></span><span style="width:145px;padding-right:5px">96000 Hz ● 24-bit ● Stereo</span><span style="width:74px;padding-right:12px">872,81 MB</span><span style="width:73px;padding-right:8px">26:28.901</span><span style="width:84px;padding-right:5px;border-right:1px solid #323232">288,92 GB free</span>`);

define('audition-app', `:host{display:flex;flex-direction:column;min-height:100vh}
  .main{flex:1;display:grid;grid-template-columns:minmax(0,1fr) 68px;gap:4px;padding:4px 1px 0 1px;min-height:0}
  .work{display:grid;grid-template-columns:485px minmax(0,1fr);grid-template-rows:minmax(0,1fr) 94px;gap:4px;min-height:0}
  .left{display:grid;grid-template-rows:428fr 457fr;gap:4px;min-height:0}
  .edit{border:1px solid var(--blue)} .low{grid-column:1/3;display:grid;grid-template-columns:704px 344px 244px minmax(0,1fr);gap:4px}
  .time{align-self:center;padding-top:12px;font:46px/58px "Open Sans",sans-serif;font-weight:300;color:#969696}`,
  `<title-bar></title-bar><menu-bar></menu-bar><tool-bar></tool-bar>
  <div class="main"><div class="work">
    <div class="left">
      <dock-panel><panel-tab slot="tabs" on under style="margin-left:12px">Files</panel-tab><panel-tab slot="tabs" style="margin-left:22px">Effects Rack</panel-tab><panel-tab slot="tabs" style="margin-left:36px">Favorites</panel-tab><files-panel></files-panel></dock-panel>
      <dock-panel style="padding-top:6px"><panel-tab slot="tabs" style="margin-left:12px">Amplitude Statistics</panel-tab><panel-tab slot="tabs" style="margin-left:37px">Diagnostics</panel-tab><panel-tab slot="tabs" on under style="margin-left:38px">Frequency Analysis</panel-tab><panel-tab slot="tabs" style="margin-left:22px">History</panel-tab><frequency-panel></frequency-panel></dock-panel>
    </div>
    <dock-panel class="edit"><panel-tab slot="tabs" on style="margin-left:10px;--bright:#989898;--tab-pad:1px">Editor: Untitled 2 *</panel-tab><audio-editor></audio-editor></dock-panel>
    <div class="low">
      <dock-panel><panel-tab slot="tabs" on style="margin-left:12px">Transport</panel-tab><transport-controls></transport-controls></dock-panel>
      <dock-panel><panel-tab slot="tabs" on style="margin-left:12px">Time</panel-tab><div class="time">7:23.756</div></dock-panel>
      <dock-panel><panel-tab slot="tabs" on style="margin-left:12px">Zoom</panel-tab><zoom-controls></zoom-controls></dock-panel>
      <dock-panel><panel-tab slot="tabs" on style="margin-left:12px">Selection/View</panel-tab><selection-view></selection-view></dock-panel>
    </div></div>
    <dock-panel><span slot="tabs" style="padding:6px 0 0 12px;color:#c4c4c4">Levels</span><level-meter></level-meter></dock-panel>
  </div><status-bar></status-bar>`);
</script>
</body>
</html>
